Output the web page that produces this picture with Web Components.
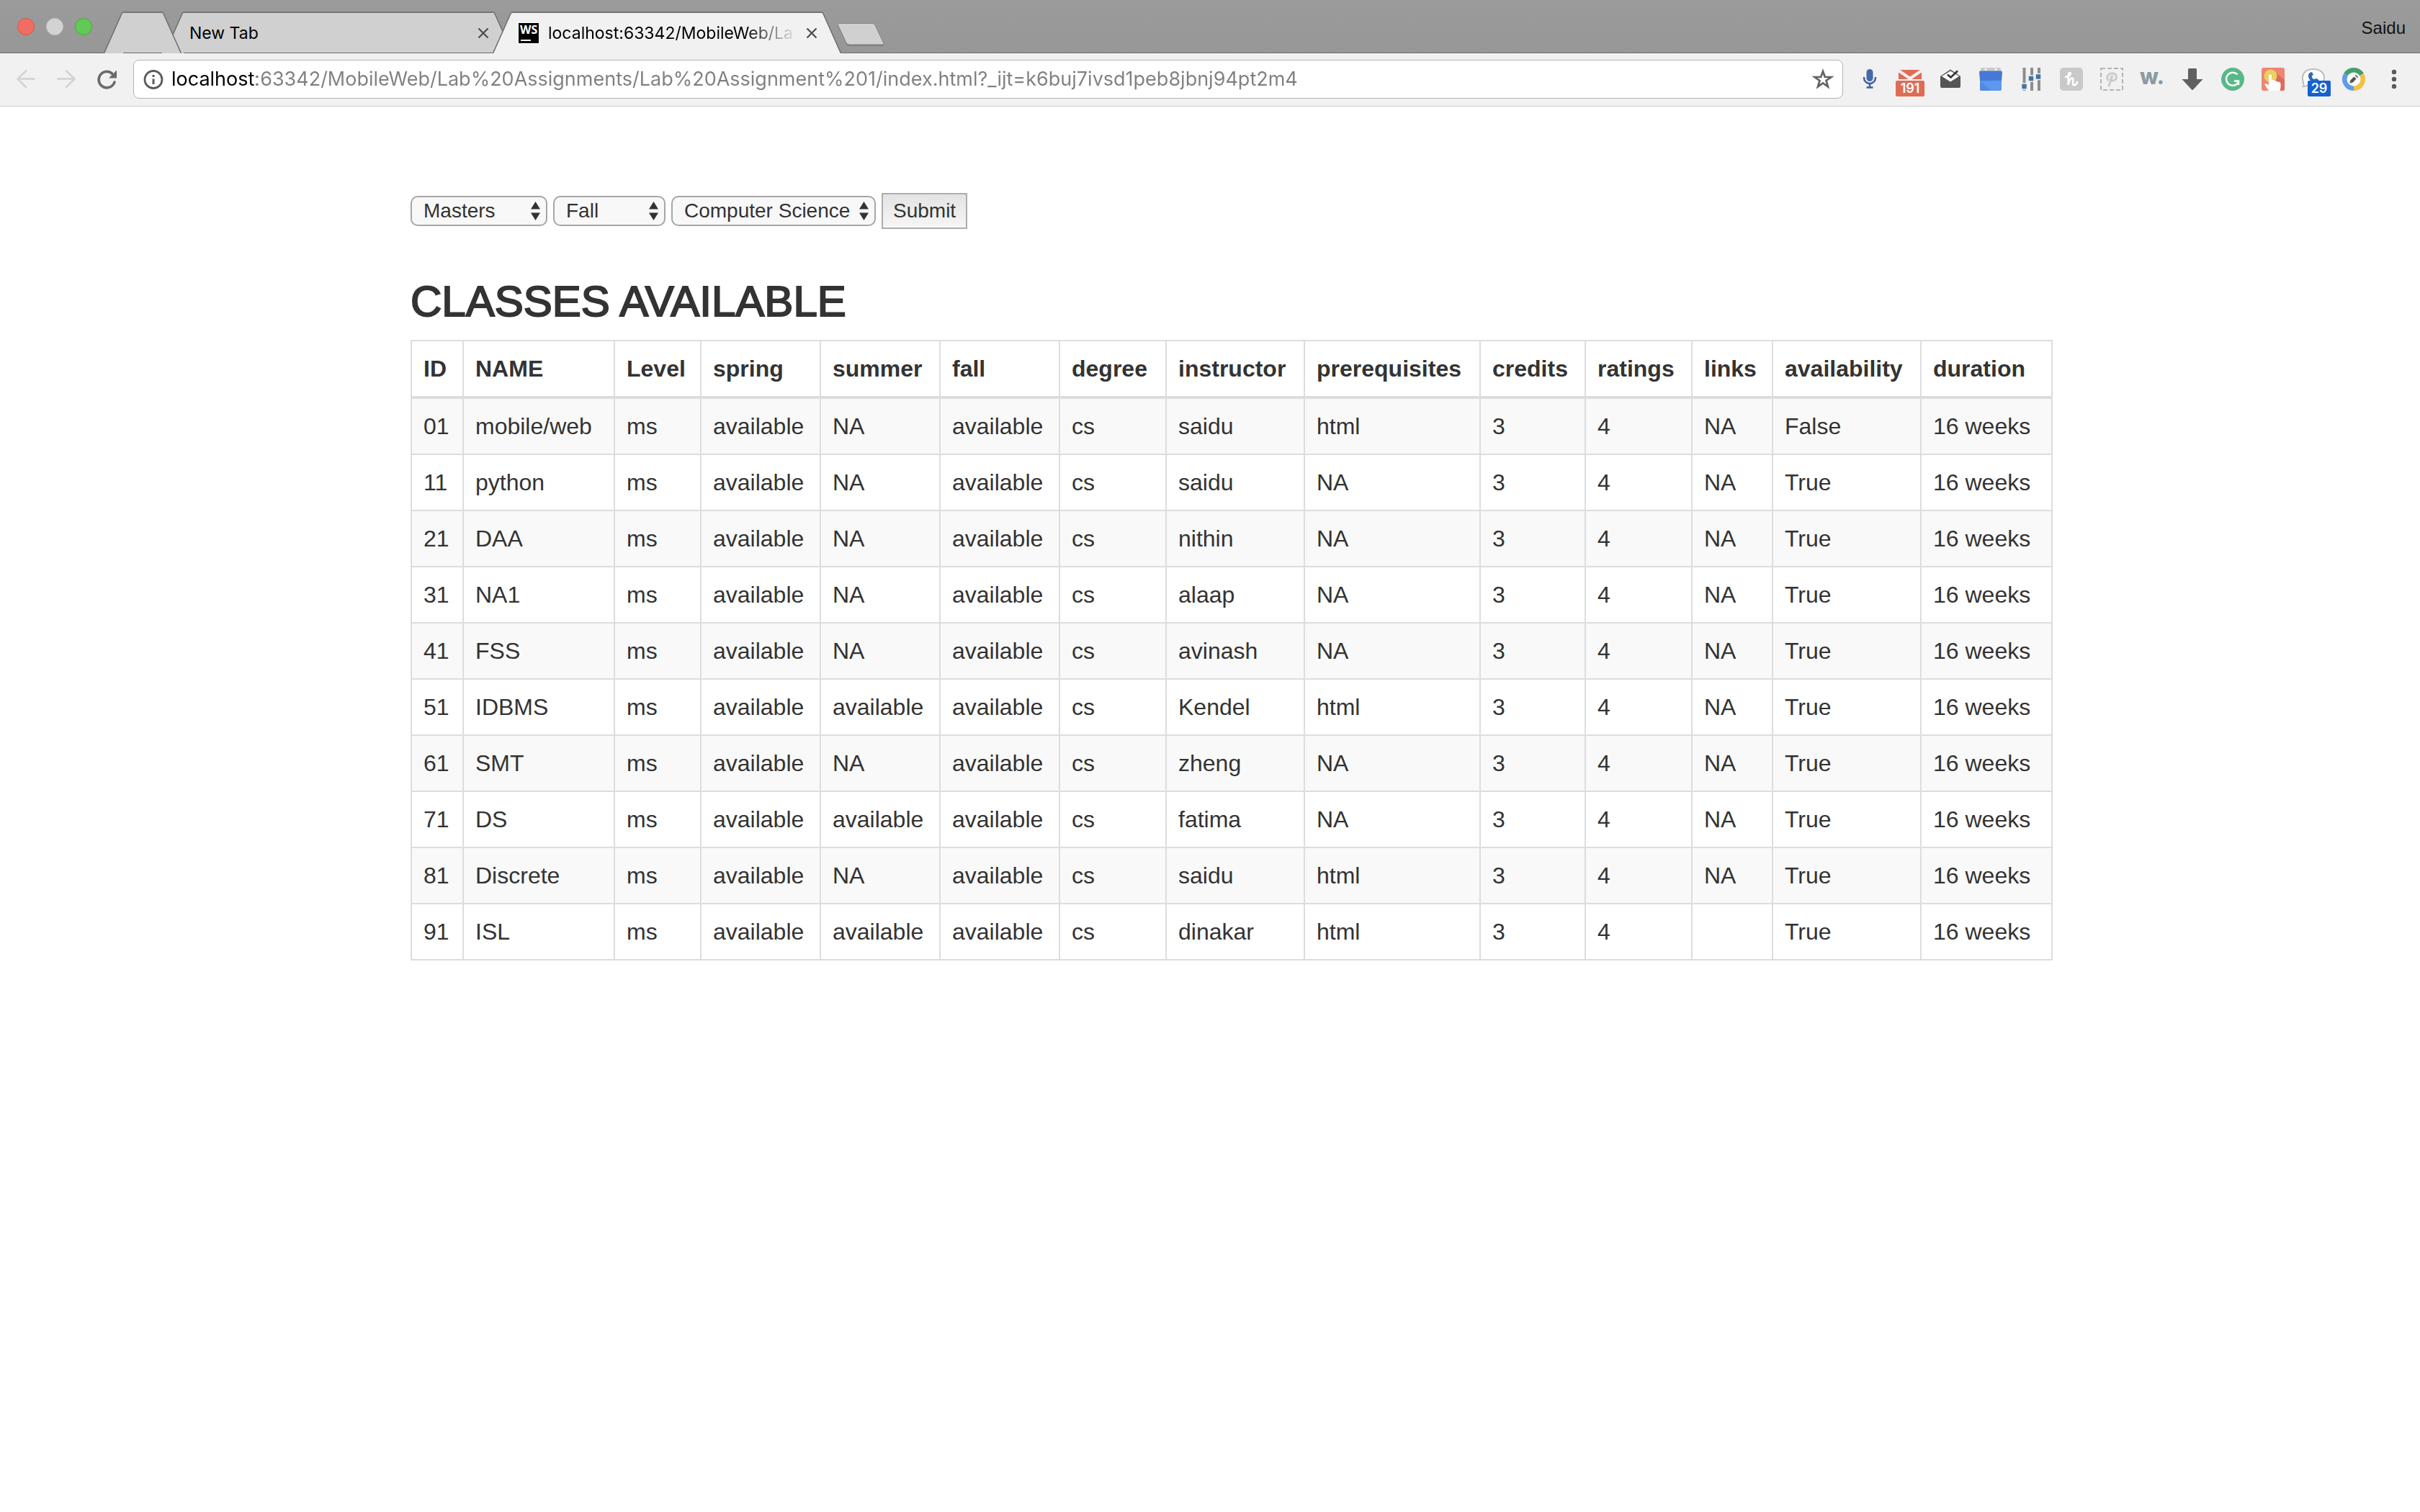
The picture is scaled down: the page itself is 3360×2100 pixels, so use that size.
<!DOCTYPE html>
<html lang="en">
<head>
<meta charset="utf-8">
<title>Classes Available</title>
<style>
  html, body { margin: 0; background: #fff; }
  body { font-family: "Liberation Sans", Arial, sans-serif; color: #333; }
</style>
</head>
<body>
<browser-window>
  <tab-strip slot="tabs">
    <browser-tab mini></browser-tab>
    <browser-tab closable>New Tab</browser-tab>
    <browser-tab closable active><ws-favicon slot="icon"></ws-favicon>localhost:63342/MobileWeb/La</browser-tab>
  </tab-strip>
  <nav-toolbar slot="toolbar"></nav-toolbar>
  <class-finder></class-finder>
</browser-window>

<script>
const define = (name, html, setup) => {
  const template = document.createElement('template');
  template.innerHTML = html;
  customElements.define(name, class extends HTMLElement {
    constructor() {
      super();
      this.attachShadow({ mode: 'open' }).append(template.content.cloneNode(true));
    }
    connectedCallback() { if (setup) setup(this, this.shadowRoot); }
  });
};

define('browser-window', `
<style>
  :host { display: flex; flex-direction: column; min-height: 100vh; }
  main { flex: 1; }
</style>
<slot name="tabs"></slot><slot name="toolbar"></slot><main><slot></slot></main>`);

/* ---------- tab strip ---------- */
define('tab-strip', `
<style>
  :host { display: flex; height: 74px; box-sizing: border-box; align-items: flex-end;
    background: linear-gradient(#9b9b9b, #979797); padding: 0 20px 0 24px; box-shadow: inset 0 -1px #6b6b6b;
    font-family: "Liberation Sans", Arial, sans-serif; }
  .lights { display: flex; gap: 16px; align-self: center; margin-right: 44px; }
  .lights button { width: 24px; height: 24px; padding: 0; border: 1px solid var(--ring); border-radius: 50%; }
  .close { background: #f16d61; --ring: #d7574c; }
  .min { background: #d3d3d3; --ring: #c4c4c4; }
  .max { background: #62c856; --ring: #4bab3c; }
  .new { padding: 0; border: 0; background: none; width: 66px; height: 34px; margin: 0 0 9px -6px; }
  .new svg { display: block; }
  .user { margin-left: auto; align-self: center; font-size: 24px; line-height: 28px; color: #111; background: none; border: 0; padding: 4px 0 0; font-family: inherit; }
</style>
<div class="lights"><button class="close" aria-label="Close window"></button><button class="min" aria-label="Minimise"></button><button class="max" aria-label="Zoom"></button></div>
<slot></slot>
<button class="new" aria-label="Open a new tab"><svg width="66" height="34" viewBox="0 0 66 34"><path d="M3.500 2H49Q52 2 53 4.500L64.500 29Q65 31.500 63 31.500H17Q14.500 31.500 13 29L1.500 4.500Q1 2 3.500 2Z" fill="#000" opacity=".25" transform="translate(0 1)"/><path d="M3.500 1.500H49Q52 1.500 53 4L64.500 28.500Q65 31 63 31H17Q14.500 31 13 28.500L1.500 4Q1 1.500 3.500 1.500Z" fill="#d0d0d0" stroke="#868686"/></svg></button>
<button class="user">Saidu</button>`);

define('browser-tab', `
<style>
  :host { --fill: #d0d0d0; display: flex; position: relative; width: 484px; height: 58px; margin-left: -28px; color: #000;
    font: 23px/32px Inter, sans-serif; }
  :host([mini]) { width: 108px; margin-right: 4px; z-index: 1; }
  :host([active]) { --fill: #f1f1f1; z-index: 2; }
  svg { display: block; flex: none; }
  .edge path:first-child { fill: var(--fill); }
  .edge path:last-child { fill: none; stroke: #6e6e6e; stroke-width: 1.5; }
  .body { flex: 1; min-width: 0; display: flex; align-items: center; gap: 12px; box-sizing: border-box; padding: 0 6px 0 8px;
    background: var(--fill); border-top: 2px solid #747474; border-bottom: 1px solid #6b6b6b; }
  :host([active]) .body { border-bottom-color: var(--fill); }
  .title { flex: 1; min-width: 0; overflow: hidden; white-space: nowrap; }
  :host([active]) .title { -webkit-mask-image: linear-gradient(90deg, #000 calc(100% - 74px), transparent); mask-image: linear-gradient(90deg, #000 calc(100% - 74px), transparent); }
  .x { display: none; padding: 0; border: 0; background: none; }
  :host([closable]) .x { display: block; }
</style>
<svg class="edge" width="27" height="58" viewBox="0 0 27 58"><path d="M0 58L1 57L25 3Q26 1 27 1V58Z"/><path d="M0.500 58L25 3Q26 1 27 1"/></svg>
<div class="body"><slot name="icon"></slot><span class="title"><slot></slot></span>
<button class="x" aria-label="Close tab"><svg width="16" height="16" viewBox="0 0 16 16"><path d="M1.500 1.500L14.500 14.500M14.500 1.500L1.500 14.500" stroke="#4c4c4c" stroke-width="2.200"/></svg></button></div>
<svg class="edge" width="27" height="58" viewBox="0 0 27 58"><path d="M27 58L26 57L2 3Q1 1 0 1V58Z"/><path d="M26.500 58L2 3Q1 1 0 1"/></svg>`);

define('ws-favicon', `
<style>
  :host { display: flex; flex-direction: column; justify-content: space-between; flex: none; box-sizing: border-box; width: 30px; height: 30px;
    background: #000; border: 1px solid #fff; padding: 1px 2px 3px; color: #fff; font: bold 16px/17px "Open Sans", sans-serif; }
  i { display: block; width: 14px; height: 2px; background: #fff; margin-left: 1px; }
</style>WS<i></i>`);

/* ---------- toolbar ---------- */
define('nav-toolbar', `
<style>
  :host { display: flex; align-items: center; box-sizing: border-box; height: 74px; padding: 0 20px 1px; gap: 21px;
    background: #f1f1f1; border-bottom: 1px solid #d0d0d0; }
  .group { display: flex; gap: 24px; align-items: center; }
  .group button, .star { position: relative; width: 32px; height: 32px; padding: 0; border: 0; background: none; flex: none; }
  svg { display: block; width: 32px; height: 32px; overflow: visible; }
  .url { flex: 1; min-width: 0; display: flex; align-items: center; box-sizing: border-box; height: 54px; padding: 0 11px;
    background: #fff; border: 1px solid #b4b4b4; border-radius: 8px; gap: 9px; }
  .url input { flex: 1; min-width: 0; height: 40px; padding: 0; border: 0; outline: 0; font: 27px/40px Inter, sans-serif;
    background: linear-gradient(90deg, #000 118px, #808080 118px); -webkit-background-clip: text; background-clip: text; -webkit-text-fill-color: transparent; }
  .badge { position: absolute; top: 18px; height: 22px; box-sizing: border-box; border-radius: 2px; color: #fff;
    font: 600 18px/22px Inter, sans-serif; text-align: center; }
  .mail { left: -4px; width: 40px; background: #df6c55; }
  .call { left: 8px; width: 32px; background: #1461d2; }
  .group .w { display: flex; justify-content: center; align-items: flex-start; font: 800 30px/24px Inter, sans-serif; color: #8c9aa2; }
</style>
<div class="group">
  <button aria-label="Back"><svg viewBox="0 0 32 32" fill="none" stroke="#d5d5d5" stroke-width="3" stroke-linecap="round" stroke-linejoin="round"><path d="M16 4.500L4.500 15.500L16 27M4.500 15.500H27.500"/></svg></button>
  <button aria-label="Forward"><svg viewBox="0 0 32 32" fill="none" stroke="#d5d5d5" stroke-width="3" stroke-linecap="round" stroke-linejoin="round"><path d="M16 4.500L27.500 15.500L16 27M27.500 15.500H4.500"/></svg></button>
  <button aria-label="Reload"><svg viewBox="0 0 32 32"><path d="M23.500 8A11.200 11.200 0 1 0 27 20" fill="none" stroke="#6a6a6a" stroke-width="3.600" stroke-linecap="round"/><path d="M30 3.500V14.500H19Z" fill="#6a6a6a"/></svg></button>
</div>
<div class="url">
  <svg style="flex:none" viewBox="0 0 32 32"><circle cx="16" cy="16.500" r="12" fill="none" stroke="#5a5a5a" stroke-width="2.800"/><path d="M16 10V13M16 15.500V23" stroke="#5a5a5a" stroke-width="3"/></svg>
  <input type="text" aria-label="Address" spellcheck="false" value="localhost:63342/MobileWeb/Lab%20Assignments/Lab%20Assignment%201/index.html?_ijt=k6buj7ivsd1peb8jbnj94pt2m4">
  <button class="star" aria-label="Bookmark this page"><svg viewBox="0 0 32 32"><path d="M16 5L18.800 13H27.500L20.500 18L23 26.500L16 21.500L9 26.500L11.500 18L4.500 13H13.200Z" fill="none" stroke="#626262" stroke-width="2.700"/></svg></button>
</div>
<div class="group">
  <button aria-label="Voice"><svg viewBox="0 0 32 32"><rect x="11.500" y="2" width="9" height="17" rx="4.500" fill="#4468ae"/><path d="M8 13V14A8 8 0 0 0 24 14V13M16 22V27M11.500 27.500H20.500" fill="none" stroke="#3f5f9f" stroke-width="2.500"/></svg></button>
  <button aria-label="Mail"><svg viewBox="0 0 32 32"><path d="M0 3H32V16H0Z" fill="#df6c55"/><path d="M0 4L16 15L32 4" fill="none" stroke="#f4f1f0" stroke-width="4"/><path d="M4 3H28L16 11.500Z" fill="#df6c55"/></svg><span class="badge mail">191</span></button>
  <button aria-label="Inbox"><svg viewBox="0 0 32 32"><path d="M2 12L16 2.500L30 12V26Q30 28 28 28H4Q2 28 2 26Z" fill="#555"/><path d="M4 12L16 4.500L28 12L16 19.500Z" fill="#fafafa"/><path d="M12 9.500L16.500 13.500L26 4.500" fill="none" stroke="#333" stroke-width="2.600"/></svg></button>
  <button aria-label="Calendar"><svg viewBox="0 0 32 32"><rect x="2" y="0" width="28" height="8" rx="1.500" fill="#c9c9c9"/><circle cx="9" cy="2.500" r="1.500" fill="#fff"/><circle cx="23" cy="2.500" r="1.500" fill="#fff"/><path d="M0 6Q0 4.500 1.500 4.500H30.500Q32 4.500 32 6L31 18H1Z" fill="#4678d6"/><path d="M1 18H31V30Q31 32 29 32H3Q1 32 1 30Z" fill="#5b98ee"/><path d="M1 18L16 32H3Q1 32 1 30Z" fill="#528add"/></svg></button>
  <button aria-label="Equalizer"><svg viewBox="0 0 32 32"><path d="M6.500 0V32M17 0V32M27 0V32" stroke="#8d8d8d" stroke-width="4"/><g fill="#4673a5" stroke="#f1f1f1" stroke-width="1.500"><rect x="2.500" y="22" width="8" height="8"/><rect x="12" y="11" width="8" height="8"/><rect x="22" y="8.500" width="8" height="8"/></g></svg></button>
  <button aria-label="Coupons"><svg viewBox="0 0 32 32"><rect width="32" height="32" rx="5" fill="#c9c9c9"/><path d="M8 13C14 12 17 7 13.500 7C11 7 12 15 11.500 24C13 17 16 13 18 15C20 17 16 23 19 24C21 24.500 23 23 24 20" fill="none" stroke="#fff" stroke-width="2.600" stroke-linecap="round"/></svg></button>
  <button aria-label="Pin"><svg viewBox="0 0 32 32"><rect x="1" y="1" width="30" height="30" fill="none" stroke="#b4b4b4" stroke-width="2" stroke-dasharray="6 3"/><path d="M11 17C7 12 13 7 18 8C25 9 23 18 17 18C14 18 14 15 17 11C15 16 14 21 12 25" fill="none" stroke="#cbcbcb" stroke-width="3" stroke-linecap="round"/></svg></button>
  <button class="w" aria-label="Word tool">w.</button>
  <button aria-label="Downloads"><svg viewBox="0 0 32 32"><path d="M10 2.500Q10 1 11.500 1H20.500Q22 1 22 2.500V16H30.500L17 30.500Q16 31.500 15 30.500L1.500 16H10Z" fill="#606060"/></svg></button>
  <button aria-label="Grammar"><svg viewBox="0 0 32 32"><circle cx="16" cy="16" r="16" fill="#58b988"/><path d="M22.500 9.500A9 9 0 1 0 24 20M18 18.500H24V24" fill="none" stroke="#fff" stroke-width="2.500"/></svg></button>
  <button aria-label="Tap"><svg viewBox="0 0 32 32"><rect width="32" height="32" rx="3" fill="#f08573"/><path d="M17 5L32 17V29Q32 32 29 32H24Z" fill="#df6a59"/><circle cx="12.500" cy="11.500" r="9" fill="#e8d162"/><path d="M10 11Q10 9.500 12 9.500Q14 9.500 14 11V17Q16 16 18 18Q20 17.500 21.500 19.500Q26 19 26.500 22Q27 27 25.500 32H10L4.500 24Q4 22 6 22L10 24Z" fill="#fff"/></svg></button>
  <button aria-label="Voice calls"><svg viewBox="0 0 32 32"><path d="M2 26C4 23 0 19 1 12C3 4 10 2 16 2C25 2 31 7 31 14C31 21 25 25 17 25C11 24 7 25 2 26Z" fill="#fff" stroke="#bdbdbd" stroke-width="2"/><path d="M11 7C7 10 9 17 15 20L24 18L21 15L16 16Q13 13 14 11L16 10L14 6Z" fill="#2c68bd"/></svg><span class="badge call">29</span></button>
  <button aria-label="Editor"><svg viewBox="0 0 32 32"><path d="M16 16L2.140 8A16 16 0 0 1 29.860 8Z" fill="#42a06b"/><path d="M16 16L29.860 8A16 16 0 0 1 16 32Z" fill="#f2c043"/><path d="M16 16V32A16 16 0 0 1 2.140 8Z" fill="#5f9bee"/><circle cx="16" cy="16" r="9.500" fill="#fff"/><path d="M12.500 19.500L18 14M19.300 12.700L20.500 11.500" stroke="#505050" stroke-width="4.500"/><path d="M10.500 21.500L11 18L14 21Z" fill="#505050"/></svg></button>
  <button aria-label="Menu"><svg viewBox="0 0 32 32" fill="#5a5a5a"><circle cx="16" cy="6" r="3.200"/><circle cx="16" cy="16" r="3.200"/><circle cx="16" cy="26" r="3.200"/></svg></button>
</div>`);

/* ---------- page content ---------- */
define('class-finder', `
<style>
  :host { display: block; box-sizing: border-box; max-width: 2340px; margin: 0 auto; padding: 120px 0 0 60px; }
  form { display: flex; align-items: center; gap: 8px; margin: 0 0 68px; }
  button { box-sizing: border-box; height: 50px; padding: 0 14px; border: 2px solid #adadad; background: linear-gradient(#e3e3e3, #f6f6f6);
    font: 28px/40px "Liberation Sans", Arial, sans-serif; color: #333; }
  h2 { margin: 0 0 20px; font-size: 60px; line-height: 66px; font-weight: 400; -webkit-text-stroke: 2px #333; }
</style>
<form>
  <pick-list label="Degree level" style="--width:190px" options="Masters"></pick-list>
  <pick-list label="Term" style="--width:156px" options="Fall"></pick-list>
  <pick-list label="Department" style="--width:284px" options="Computer Science"></pick-list>
  <button type="button">Submit</button>
</form>
<h2>CLASSES AVAILABLE</h2>
<class-table></class-table>`);

define('pick-list', `
<style>
  :host { display: block; position: relative; width: var(--width); }
  select { appearance: none; display: block; width: 100%; height: 42px; box-sizing: border-box; padding: 0 0 0 16px; margin: 0;
    border: 2px solid #a6a6a6; border-radius: 10px; background: #f8f8f8; color: #333; font: 28px/38px "Liberation Sans", Arial, sans-serif; }
  svg { position: absolute; right: 10px; top: 8px; pointer-events: none; }
</style>
<select></select>
<svg width="13" height="26" viewBox="0 0 13 26"><path d="M0 10.500L6.500 0L13 10.500ZM0 15.500L6.500 26L13 15.500Z" fill="#333"/></svg>`,
(host, root) => {
  const select = root.querySelector('select');
  select.setAttribute('aria-label', host.getAttribute('label'));
  select.replaceChildren(...host.getAttribute('options').split('|').map(text => new Option(text)));
});

// Each heading with its share of the table's width.
const COLUMNS = [['ID', 72], ['NAME', 210], ['Level', 120], ['spring', 166], ['summer', 166], ['fall', 166], ['degree', 148],
  ['instructor', 192], ['prerequisites', 244], ['credits', 146], ['ratings', 148], ['links', 112], ['availability', 206], ['duration', 182]];
const CLASSES = [
  // id, name, summer, instructor, prerequisites, links, availability
  ['01', 'mobile/web', 'NA', 'saidu', 'html', 'NA', 'False'],
  ['11', 'python', 'NA', 'saidu', 'NA', 'NA', 'True'],
  ['21', 'DAA', 'NA', 'nithin', 'NA', 'NA', 'True'],
  ['31', 'NA1', 'NA', 'alaap', 'NA', 'NA', 'True'],
  ['41', 'FSS', 'NA', 'avinash', 'NA', 'NA', 'True'],
  ['51', 'IDBMS', 'available', 'Kendel', 'html', 'NA', 'True'],
  ['61', 'SMT', 'NA', 'zheng', 'NA', 'NA', 'True'],
  ['71', 'DS', 'available', 'fatima', 'NA', 'NA', 'True'],
  ['81', 'Discrete', 'NA', 'saidu', 'html', 'NA', 'True'],
  ['91', 'ISL', 'available', 'dinakar', 'html', '', 'True'],
];

define('class-table', `
<style>
  :host { display: block; }
  table { width: 100%; table-layout: fixed; border-collapse: collapse; border: 2px solid #ddd; font-size: 32px; line-height: 44px; }
  th, td { padding: 16px 0 16px 16px; border: 2px solid #ddd; text-align: left; vertical-align: top; }
  th { border-bottom-width: 4px; }
  tbody tr:nth-child(odd) { background: #f9f9f9; }
</style>
<table><colgroup></colgroup><thead><tr></tr></thead><tbody></tbody></table>`,
(host, root) => {
  const cell = (tag, text) => Object.assign(document.createElement(tag), { textContent: text });
  const total = COLUMNS.reduce((sum, [, share]) => sum + share, 0);
  root.querySelector('colgroup').replaceChildren(...COLUMNS.map(([, share]) => {
    const col = document.createElement('col');
    col.style.width = share / total * 100 + '%';
    return col;
  }));
  root.querySelector('thead tr').replaceChildren(...COLUMNS.map(([text]) => cell('th', text)));
  root.querySelector('tbody').replaceChildren(...CLASSES.map(([id, name, summer, instructor, prereq, links, open]) => {
    const row = document.createElement('tr');
    row.append(...[id, name, 'ms', 'available', summer, 'available', 'cs', instructor, prereq, '3', '4', links, open, '16 weeks'].map(text => cell('td', text)));
    return row;
  }));
});
</script>
</body>
</html>
